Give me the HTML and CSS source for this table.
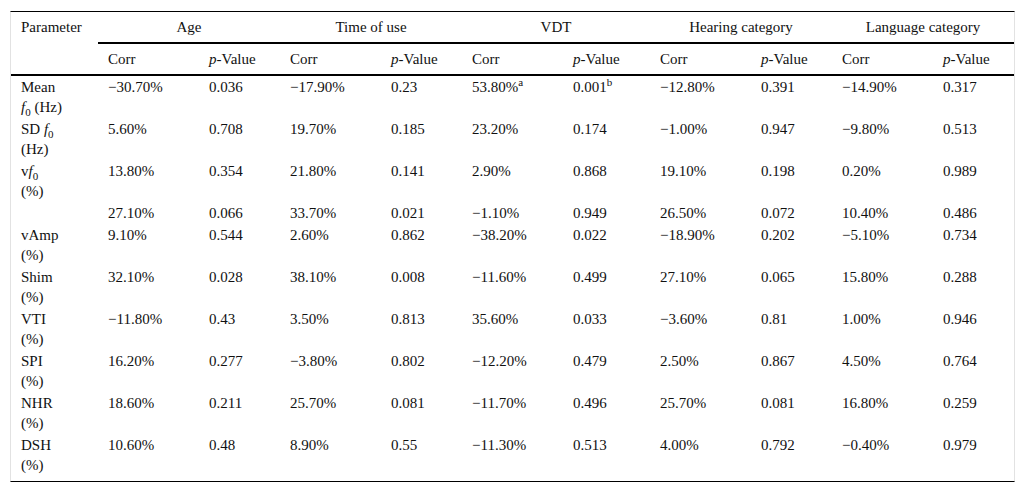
FILE: index.html
```html
<!DOCTYPE html>
<html>
<head>
<meta charset="utf-8">
<link rel="stylesheet" href="styles.css">
</head>
<body>
<div class="wrap">
<table class="data">
<colgroup>
<col class="c-param"><col class="c-corr"><col class="c-p"><col class="c-corr"><col class="c-p"><col class="c-corr"><col class="c-pw"><col class="c-corr"><col class="c-p"><col class="c-corr"><col class="c-p">
</colgroup>
<thead>
<tr class="groups">
<th rowspan="2" class="param">Parameter</th>
<th colspan="2" class="grp">Age</th>
<th colspan="2" class="grp">Time of use</th>
<th colspan="2" class="grp">VDT</th>
<th colspan="2" class="grp">Hearing category</th>
<th colspan="2" class="grp">Language category</th>
</tr>
<tr class="subs">
<th>Corr</th><th><i>p</i>-Value</th>
<th>Corr</th><th><i>p</i>-Value</th>
<th>Corr</th><th><i>p</i>-Value</th>
<th>Corr</th><th><i>p</i>-Value</th>
<th>Corr</th><th><i>p</i>-Value</th>
</tr>
</thead>
<tbody>
<tr><td>Mean<br><i>f</i><sub>0</sub> (Hz)</td><td>−30.70%</td><td>0.036</td><td>−17.90%</td><td>0.23</td><td>53.80%<sup>a</sup></td><td>0.001<sup>b</sup></td><td>−12.80%</td><td>0.391</td><td>−14.90%</td><td>0.317</td></tr>
<tr><td>SD <i>f</i><sub>0</sub><br>(Hz)</td><td>5.60%</td><td>0.708</td><td>19.70%</td><td>0.185</td><td>23.20%</td><td>0.174</td><td>−1.00%</td><td>0.947</td><td>−9.80%</td><td>0.513</td></tr>
<tr><td>v<i>f</i><sub>0</sub><br>(%)</td><td>13.80%</td><td>0.354</td><td>21.80%</td><td>0.141</td><td>2.90%</td><td>0.868</td><td>19.10%</td><td>0.198</td><td>0.20%</td><td>0.989</td></tr>
<tr><td></td><td>27.10%</td><td>0.066</td><td>33.70%</td><td>0.021</td><td>−1.10%</td><td>0.949</td><td>26.50%</td><td>0.072</td><td>10.40%</td><td>0.486</td></tr>
<tr><td>vAmp<br>(%)</td><td>9.10%</td><td>0.544</td><td>2.60%</td><td>0.862</td><td>−38.20%</td><td>0.022</td><td>−18.90%</td><td>0.202</td><td>−5.10%</td><td>0.734</td></tr>
<tr><td>Shim<br>(%)</td><td>32.10%</td><td>0.028</td><td>38.10%</td><td>0.008</td><td>−11.60%</td><td>0.499</td><td>27.10%</td><td>0.065</td><td>15.80%</td><td>0.288</td></tr>
<tr><td>VTI<br>(%)</td><td>−11.80%</td><td>0.43</td><td>3.50%</td><td>0.813</td><td>35.60%</td><td>0.033</td><td>−3.60%</td><td>0.81</td><td>1.00%</td><td>0.946</td></tr>
<tr><td>SPI<br>(%)</td><td>16.20%</td><td>0.277</td><td>−3.80%</td><td>0.802</td><td>−12.20%</td><td>0.479</td><td>2.50%</td><td>0.867</td><td>4.50%</td><td>0.764</td></tr>
<tr><td>NHR<br>(%)</td><td>18.60%</td><td>0.211</td><td>25.70%</td><td>0.081</td><td>−11.70%</td><td>0.496</td><td>25.70%</td><td>0.081</td><td>16.80%</td><td>0.259</td></tr>
<tr class="last"><td>DSH<br>(%)</td><td>10.60%</td><td>0.48</td><td>8.90%</td><td>0.55</td><td>−11.30%</td><td>0.513</td><td>4.00%</td><td>0.792</td><td>−0.40%</td><td>0.979</td></tr>
</tbody>
</table>
</div>
</body>
</html>
```

FILE: styles.css
```css
html, body {
  margin: 0;
  padding: 0;
  background: #ffffff;
}

body {
  font-family: "Liberation Serif", "Times New Roman", serif;
  font-size: 15px;
  color: #111111;
}

.wrap {
  margin: 11px 0 0 10px;
  width: 1003px;
  border-top: 1px solid #000;
  border-bottom: 1px solid #000;
  border-left: 1px solid #e2e2e2;
  border-right: 1px solid #e2e2e2;
}

.data {
  border-collapse: collapse;
  table-layout: fixed;
  width: 1003px;
}

.c-param { width: 87px; }
.c-corr { width: 101px; }
.c-p { width: 81px; }
.c-pw { width: 87px; }

.data th {
  font-weight: normal;
  text-align: left;
  line-height: 20px;
  padding: 5px 10px;
  vertical-align: middle;
  white-space: nowrap;
}

.data th.param {
  vertical-align: top;
}

.data th.grp {
  text-align: center;
  border-bottom: 2px solid #000;
}

.data thead {
  border-bottom: 2px solid #000;
}

.data td {
  line-height: 20px;
  padding: 1px 10px 1px 10px;
  vertical-align: top;
  white-space: nowrap;
}

.data tr.last td {
  padding-bottom: 6px;
}

.data sub {
  font-size: 11px;
  line-height: 0;
  vertical-align: -4px;
}

.data sup {
  font-size: 11px;
  line-height: 0;
  vertical-align: 6px;
}
```
